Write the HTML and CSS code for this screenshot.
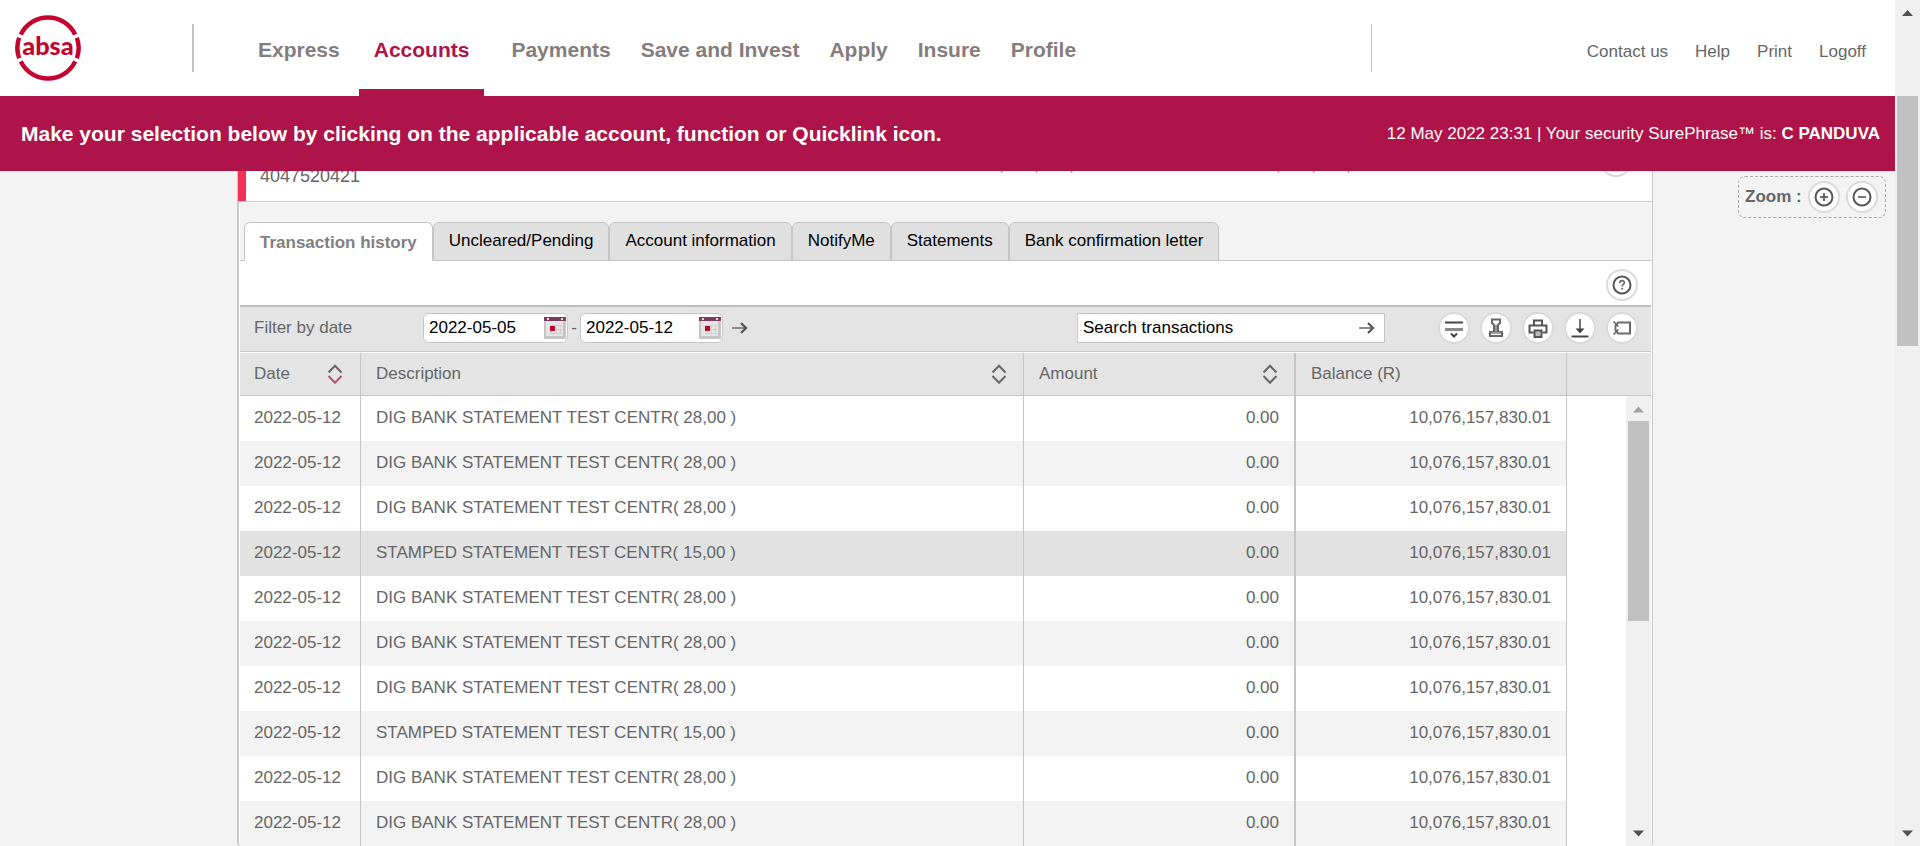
FILE: index.html
```html
<!DOCTYPE html>
<html lang="en">
<head>
<meta charset="utf-8">
<title>Absa Online - Accounts</title>
<link rel="stylesheet" href="styles.css">
</head>
<body>
<svg class="sprite" aria-hidden="true">
  <symbol id="calendar" viewBox="0 0 22 22">
    <rect x="0" y="3" width="22" height="19" fill="#c6c4c5"/>
    <rect x="2" y="4" width="17" height="15" fill="#e6e5e6"/>
    <path d="M6 8.500h12M6 12.500h12M6 16.500h12M7.500 8v9M12.500 8v9M16.500 8v9" stroke="#d0cfd0" fill="none"/>
    <rect x="0" y="0" width="22" height="4" fill="#7c3a5e"/>
    <path d="M4 1v2M18 1v2" stroke="#e6d6df" stroke-width="2"/>
    <rect x="6" y="9" width="5" height="5" fill="#b8062f"/>
  </symbol>
  <symbol id="arrow" viewBox="0 0 16 12">
    <path d="M0 6h14" stroke="#8a8a8a" stroke-width="2" fill="none"/>
    <path d="M9 1l5 5-5 5" stroke="#555" stroke-width="2.200" fill="none"/>
  </symbol>
  <symbol id="sort" viewBox="0 0 16 20">
    <path class="sort-up" d="M1.500 8.500L8 1.800l6.500 6.700"/>
    <path class="sort-down" d="M1.500 12L8 18.700l6.500-6.700"/>
  </symbol>
</svg>

<div class="page">
  <header class="top">
    <a class="logo" href="#" aria-label="Absa home">
      <svg width="68" height="68" viewBox="-1 -1 70 70">
        <g fill="none" stroke="#c4042f" stroke-width="4.600">
          <path d="M6 20.200A31 31 0 0 1 62 20.200"/>
          <path d="M6 47.800A31 31 0 0 0 62 47.800"/>
          <path d="M4.300 23.500A31 31 0 0 0 4.300 44.500"/>
          <path d="M63.700 23.500A31 31 0 0 1 63.700 44.500"/>
        </g>
        <text class="logo-text" x="34" y="41" text-anchor="middle">absa</text>
      </svg>
    </a>
    <nav class="nav">
      <a href="#">Express</a>
      <a class="active" href="#">Accounts</a>
      <a href="#">Payments</a>
      <a href="#">Save and Invest</a>
      <a href="#">Apply</a>
      <a href="#">Insure</a>
      <a href="#">Profile</a>
    </nav>
    <div class="tools">
      <a href="#">Contact us</a>
      <a href="#">Help</a>
      <a href="#">Print</a>
      <a href="#">Logoff</a>
    </div>
  </header>

  <div class="banner">
    <h1>Make your selection below by clicking on the applicable account, function or Quicklink icon.</h1>
    <p>12 May 2022 23:31 | Your security SurePhrase™ is: <b>C PANDUVA</b></p>
  </div>

  <div class="content">
    <main class="main">
      <section class="account">
        <span class="acc-no">4047520421</span>
        <span class="acc-amount">10,076,157,830.01</span>
        <span class="acc-amount acc-available">10,076,157,830.01</span>
        <span class="acc-more"><svg width="32" height="32" viewBox="0 0 32 32"><circle cx="16" cy="16" r="15" fill="#fff" stroke="#d6d6d6" stroke-width="2"/><path d="M11 26h10" stroke="#ddd" stroke-width="2"/></svg></span>
      </section>

      <section class="panel">
        <div class="tabs" role="tablist">
          <button class="tab selected" role="tab" aria-selected="true">Transaction history</button>
          <button class="tab" role="tab">Uncleared/Pending</button>
          <button class="tab" role="tab">Account information</button>
          <button class="tab" role="tab">NotifyMe</button>
          <button class="tab" role="tab">Statements</button>
          <button class="tab" role="tab">Bank confirmation letter</button>
        </div>

        <div class="help-row">
          <button class="round" aria-label="Help">
            <svg viewBox="0 0 32 32"><circle cx="16" cy="16" r="8.500" fill="none" stroke="#555" stroke-width="2"/><path d="M13.800 14c0-3.200 4.600-3 4.600-.5 0 1.700-2.300 1.900-2.300 4" fill="none" stroke="#666" stroke-width="1.600"/><circle cx="16.100" cy="19.800" r="1" fill="#666"/></svg>
          </button>
        </div>

        <div class="toolbar">
          <label class="filter-label" for="from">Filter by date</label>
          <span class="date-box"><input id="from" type="text" value="2022-05-05"><svg width="22" height="22"><use href="#calendar"/></svg></span>
          <span class="dash">-</span>
          <span class="date-box date-to"><input type="text" aria-label="To date" value="2022-05-12"><svg width="22" height="22"><use href="#calendar"/></svg></span>
          <button class="go" aria-label="Apply filter"><svg width="16" height="12"><use href="#arrow"/></svg></button>
          <span class="search"><input type="text" aria-label="Search transactions" value="Search transactions"><button class="go" aria-label="Search"><svg width="16" height="12"><use href="#arrow"/></svg></button></span>
          <div class="actions">
            <button class="round" aria-label="Show more filters"><svg viewBox="0 0 32 32"><path d="M7 10.500h18" stroke="#444" stroke-width="2"/><path d="M7 17.500h18" stroke="#8a8a8a" stroke-width="3"/><path d="M13 21.500l3 3 3-3" fill="none" stroke="#444" stroke-width="2"/></svg></button>
            <button class="round" aria-label="Stamped statement"><svg viewBox="0 0 32 32"><path d="M12 7.500h8v3.500l-2 2v7h4v4H10v-4h4v-7l-2-2z" fill="none" stroke="#666" stroke-width="2"/><path d="M16 13v8M11 21h10" stroke="#999" stroke-width="2"/></svg></button>
            <button class="round" aria-label="Print"><svg viewBox="0 0 32 32"><path d="M12 13V8.500h8V13M11.500 20.500H7.500V13.500h17v7h-4" fill="none" stroke="#555" stroke-width="2"/><path d="M12.500 18.500h7v6.500h-7z" fill="#bbb" stroke="#555" stroke-width="2"/></svg></button>
            <button class="round" aria-label="Download"><svg viewBox="0 0 32 32"><path d="M16 7v13" stroke="#777" stroke-width="2"/><path d="M11.500 16.500h9L16 21.500z" fill="#444"/><path d="M7.500 24.500h17" stroke="#444" stroke-width="2"/></svg></button>
            <button class="round" aria-label="Tag"><svg viewBox="0 0 32 32"><path d="M12 10.500h12v11H12L9.500 18.500v-5z" fill="none" stroke="#6a6a6a" stroke-width="2"/><path d="M7.500 9.500l5 5M7.500 22.500l5-5" stroke="#666" stroke-width="1.600"/></svg></button>
          </div>
        </div>

        <div class="grid">
          <table>
            <colgroup><col class="c-date"><col><col class="c-amount"><col class="c-balance"><col class="c-end"></colgroup>
            <thead>
              <tr>
                <th scope="col"><div class="th">Date <svg class="sorted" width="16" height="20"><use href="#sort"/></svg></div></th>
                <th scope="col"><div class="th">Description <svg width="16" height="20"><use href="#sort"/></svg></div></th>
                <th scope="col"><div class="th">Amount <svg width="16" height="20"><use href="#sort"/></svg></div></th>
                <th scope="col"><div class="th">Balance (R)</div></th>
                <td></td>
              </tr>
            </thead>
            <tbody>
              <tr><td>2022-05-12</td><td>DIG BANK STATEMENT TEST CENTR( 28,00 )</td><td>0.00</td><td>10,076,157,830.01</td><td></td></tr>
              <tr><td>2022-05-12</td><td>DIG BANK STATEMENT TEST CENTR( 28,00 )</td><td>0.00</td><td>10,076,157,830.01</td><td></td></tr>
              <tr><td>2022-05-12</td><td>DIG BANK STATEMENT TEST CENTR( 28,00 )</td><td>0.00</td><td>10,076,157,830.01</td><td></td></tr>
              <tr class="hover"><td>2022-05-12</td><td>STAMPED STATEMENT TEST CENTR( 15,00 )</td><td>0.00</td><td>10,076,157,830.01</td><td></td></tr>
              <tr><td>2022-05-12</td><td>DIG BANK STATEMENT TEST CENTR( 28,00 )</td><td>0.00</td><td>10,076,157,830.01</td><td></td></tr>
              <tr><td>2022-05-12</td><td>DIG BANK STATEMENT TEST CENTR( 28,00 )</td><td>0.00</td><td>10,076,157,830.01</td><td></td></tr>
              <tr><td>2022-05-12</td><td>DIG BANK STATEMENT TEST CENTR( 28,00 )</td><td>0.00</td><td>10,076,157,830.01</td><td></td></tr>
              <tr><td>2022-05-12</td><td>STAMPED STATEMENT TEST CENTR( 15,00 )</td><td>0.00</td><td>10,076,157,830.01</td><td></td></tr>
              <tr><td>2022-05-12</td><td>DIG BANK STATEMENT TEST CENTR( 28,00 )</td><td>0.00</td><td>10,076,157,830.01</td><td></td></tr>
              <tr><td>2022-05-12</td><td>DIG BANK STATEMENT TEST CENTR( 28,00 )</td><td>0.00</td><td>10,076,157,830.01</td><td></td></tr>
            </tbody>
          </table>
          <div class="scrollbar inner" aria-hidden="true">
            <svg width="25" height="25" viewBox="0 0 25 25"><path d="M7 16.500l5.500-6 5.500 6z" fill="#a3a3a3"/></svg>
            <span class="thumb"></span>
            <svg class="down" width="25" height="25" viewBox="0 0 25 25"><path d="M7 9.500h11l-5.500 6z" fill="#505050"/></svg>
          </div>
        </div>
      </section>
    </main>

    <aside class="side">
      <div class="zoom">
        <b>Zoom :</b>
        <button class="round" aria-label="Zoom in"><svg viewBox="0 0 32 32"><circle cx="16" cy="16" r="8.500" fill="none" stroke="#555" stroke-width="2"/><path d="M12 16h8M16 12v8" stroke="#666" stroke-width="2"/></svg></button>
        <button class="round" aria-label="Zoom out"><svg viewBox="0 0 32 32"><circle cx="16" cy="16" r="8.500" fill="none" stroke="#555" stroke-width="2"/><path d="M12 16h8" stroke="#777" stroke-width="2"/></svg></button>
      </div>
    </aside>
  </div>
</div>

<div class="scrollbar outer" aria-hidden="true">
  <svg width="25" height="25" viewBox="0 0 25 25"><path d="M7 16l5.500-6 5.500 6z" fill="#505050"/></svg>
  <span class="thumb"></span>
  <svg class="down" width="25" height="25" viewBox="0 0 25 25"><path d="M7 9.500h11l-5.500 6z" fill="#505050"/></svg>
</div>
</body>
</html>
```

FILE: styles.css
```css
* { box-sizing: border-box; }

body {
  margin: 0;
  height: 100vh;
  overflow: hidden;
  display: flex;
  background: #f3f3f3;
  color: #666;
  font: 17px/20px "Liberation Sans", Arial, sans-serif;
}

a { color: inherit; text-decoration: none; }

button {
  border: 0;
  padding: 0;
  background: none;
  color: inherit;
  font: inherit;
}

input {
  min-width: 0;
  flex: 1;
  border: 0;
  padding: 0;
  background: none;
  color: #000;
  font: inherit;
  outline: 0;
}

svg { display: block; flex: none; }
.sprite { position: absolute; width: 0; height: 0; }

.page {
  flex: 1;
  min-width: 0;
  display: flex;
  flex-direction: column;
}

/* Header */
.top {
  position: relative;
  z-index: 1;
  flex: none;
  height: 96px;
  display: flex;
  align-items: center;
  background: #fff;
}

.logo { width: 192px; padding-left: 14px; }
.logo-text { font: 900 26px Lato, sans-serif; fill: #c4042f; }

.nav {
  align-self: stretch;
  display: flex;
  margin-right: auto;
  color: #857d7d;
  font-size: 21px;
  font-weight: bold;
}

.nav::before {
  content: "";
  align-self: center;
  width: 2px;
  height: 48px;
  margin-right: 49px;
  background: #c5c5c5;
}

.nav a {
  padding: 40px 15px 0;
}

.nav .active {
  margin: 0 12px 0 4px;
  border-bottom: 7px solid #ae1449;
  color: #ae1449;
}

.tools {
  display: flex;
  align-items: center;
  justify-content: flex-end;
  gap: 27px;
  width: 524px;
  height: 48px;
  padding: 8px 29px 0 0;
  border-left: 1px solid #c5c5c5;
}

.banner {
  position: relative;
  z-index: 1;
  flex: none;
  height: 75px;
  display: flex;
  align-items: center;
  justify-content: space-between;
  padding: 0 15px 0 21px;
  background: #ae1449;
  color: #fff;
}

.banner h1 { margin: 0; font-size: 21px; }
.banner p { margin: 0; }

/* Content */
.content {
  flex: 1;
  min-height: 0;
  display: grid;
  grid-template-columns: minmax(0, 1fr) 242px;
  padding-left: 237px;
}

.main {
  min-height: 0;
  display: flex;
  flex-direction: column;
}

.account {
  flex: none;
  height: 31px;
  display: flex;
  align-items: flex-end;
  padding: 0 20px 15px 22px;
  border: solid #c8c8c8;
  border-width: 0 1px 1px;
  background: #fff;
  box-shadow: inset 8px 0 #f03355;
  font-size: 18px;
}

.acc-no { width: 719px; }
.acc-amount { width: 277px; padding-bottom: 12px; }
.acc-available { color: #b04a5a; }
.acc-more { margin-left: auto; padding-bottom: 9px; }

.panel {
  flex: 1;
  display: flex;
  flex-direction: column;
  border: solid #c8c8c8;
  border-width: 0 1px 0 2px;
  border-radius: 0 0 4px 4px;
  padding: 1px 1px 0;
  background: #fff;
}

.tabs {
  display: flex;
  align-items: flex-end;
  padding: 19px 0 0 4px;
  background: linear-gradient(#c5c5c5, #c5c5c5) bottom / 100% 1px no-repeat #f3f3f3;
}

.tab {
  height: 39px;
  padding: 0 15px 2px;
  border: 1px solid #c5c5c5;
  border-radius: 6px 6px 0 0;
  background: #e0e0e0;
  color: #000;
}

.tab.selected {
  padding: 2px 15px 0;
  border-bottom-color: #fff;
  background: #fff;
  color: #808080;
  font-weight: bold;
}

.help-row {
  display: flex;
  justify-content: flex-end;
  padding: 8px 13px 4px 0;
  border-bottom: 2px solid #bdbdbd;
}

.round {
  width: 32px;
  height: 32px;
  border: 2px solid #dadada;
  border-radius: 50%;
  background: #fff;
}

.round svg { width: 32px; height: 32px; margin: -2px; }

.toolbar {
  height: 45px;
  display: flex;
  align-items: center;
  padding: 0 13px 2px 14px;
  border-bottom: 1px solid #c5c5c5;
  background: #e4e4e4;
}

.filter-label { width: 169px; }

.date-box {
  width: 145px;
  height: 30px;
  display: flex;
  align-items: center;
  padding: 0 1px 0 5px;
  border: 1px solid #c8c8c8;
  border-radius: 6px;
  background: #fff;
}

.date-to { width: 143px; }
.dash { width: 12px; text-align: center; }
.go { margin-left: 9px; }

.search {
  width: 308px;
  height: 30px;
  display: flex;
  align-items: center;
  margin-left: auto;
  padding: 0 9px 0 5px;
  border: 1px solid #c8c8c8;
  background: #fff;
}

.actions {
  display: flex;
  gap: 10px;
  margin-left: 53px;
}

/* Transactions */
.grid { position: relative; padding-top: 1px; }

table {
  width: 100%;
  table-layout: fixed;
  border-spacing: 0;
}

.c-date { width: 121px; }
.c-amount { width: 272px; }
.c-balance { width: 271px; }
.c-end { width: 84px; }

thead th, thead td {
  height: 43px;
  padding: 0 16px 0 15px;
  border-bottom: 1px solid #c5c5c5;
  background: #e4e4e4;
  font-weight: normal;
  text-align: left;
}

.th {
  display: flex;
  align-items: center;
  justify-content: space-between;
  height: 40px;
}

.th svg {
  fill: none;
  stroke: #666;
  stroke-width: 2;
}

.sort-down { stroke: var(--down, #666); }
.sorted { --down: #b3517c; }

tbody td {
  height: 45px;
  padding: 0 15px 2px;
  background: #fff;
}

thead th:first-child { padding: 0 17px 0 14px; }
tbody td:first-child { padding-left: 14px; }

th:not(:last-child), td:not(:last-child) { border-right: 1px solid #c5c5c5; }
th:nth-child(3), td:nth-child(3) { border-right-width: 2px; }
td:nth-child(n + 3) { text-align: right; }
tbody tr:nth-child(even) td:not(:last-child) { background: #f3f3f3; }
tbody tr.hover td:not(:last-child) { background: #e2e2e2; }

/* Scroll bars */
.scrollbar {
  flex: none;
  width: 25px;
  display: flex;
  flex-direction: column;
  align-items: center;
  background: #f0f0f0;
}

.thumb { width: 21px; background: #c1c1c1; }
.scrollbar .down { margin-top: auto; }
.outer .thumb { height: 250px; margin-top: 71px; }
.inner .thumb { height: 200px; }

.inner {
  position: absolute;
  top: 44px;
  right: 0;
  bottom: 0;
}

/* Zoom box */
.side { padding: 5px 9px 0 0; }

.zoom {
  width: 148px;
  height: 42px;
  display: flex;
  align-items: center;
  justify-content: space-between;
  margin-left: auto;
  padding: 0 7px 0 6px;
  border: 1px dashed #aaa;
  border-radius: 7px;
}
```
